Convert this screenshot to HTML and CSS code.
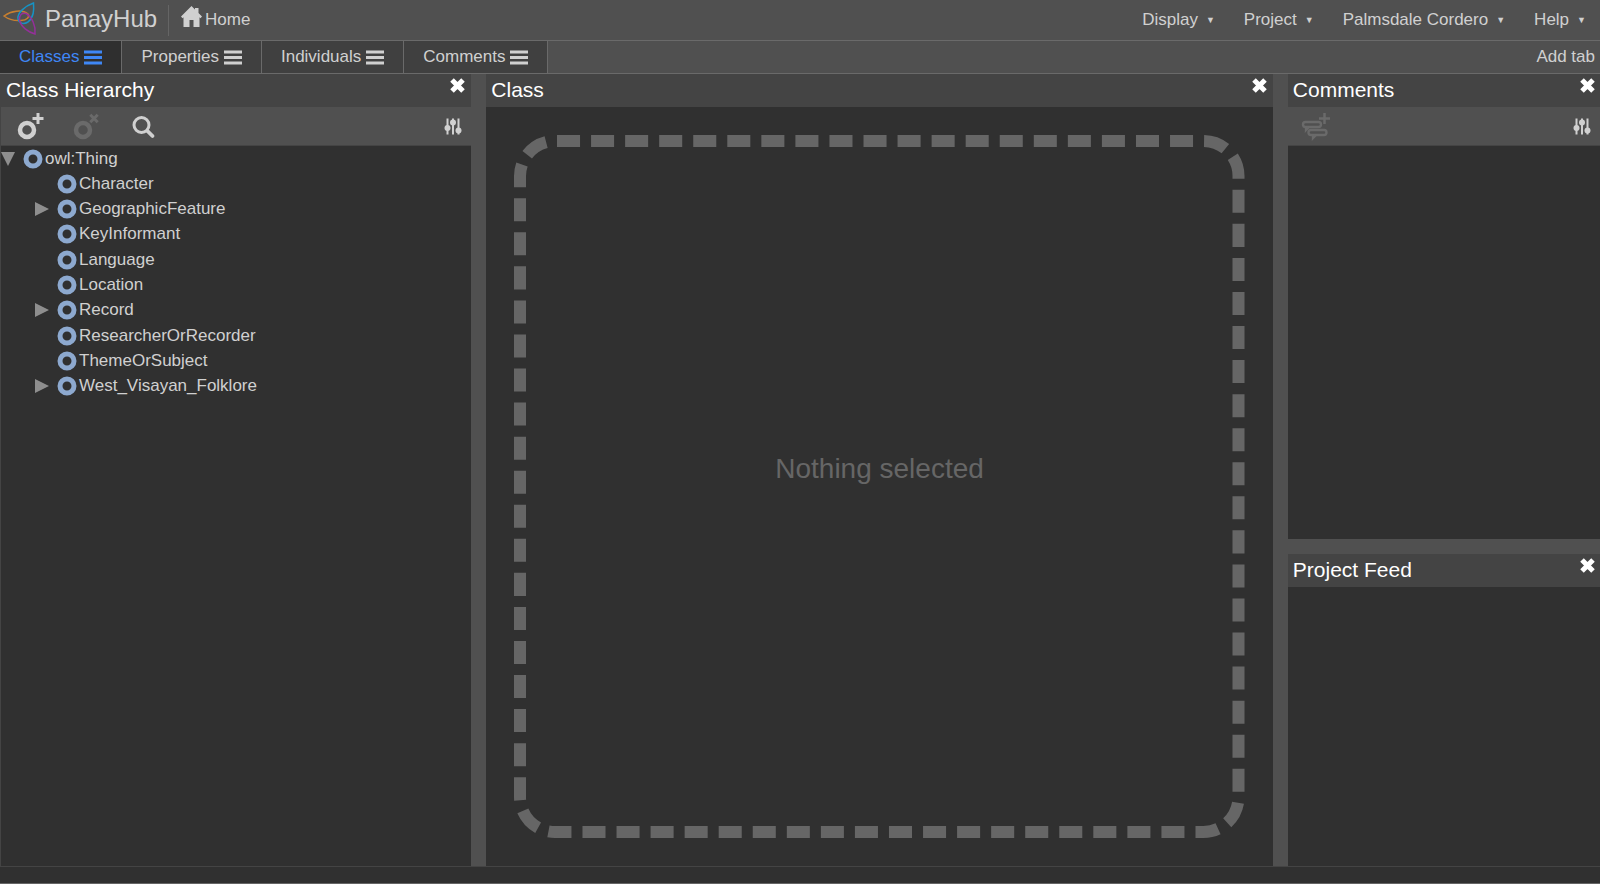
FILE: index.html
```html
<!DOCTYPE html>
<html lang="en">
<head>
<meta charset="utf-8">
<title>PanayHub</title>
<link rel="stylesheet" href="styles.css">
</head>
<body>
<svg class="symbols" aria-hidden="true">
  <symbol id="i-close" viewBox="0 0 15 15"><path d="M2 2 13 13M13 2 2 13" fill="none" stroke="currentColor" stroke-width="5"/></symbol>
  <symbol id="i-bars" viewBox="0 0 18 15"><path d="M0 2h18M0 7.500h18M0 13h18" fill="none" stroke="currentColor" stroke-width="3"/></symbol>
  <symbol id="i-sliders" viewBox="0 0 18 17"><path d="M3.500 0.500v16M9 0.500v16M14.500 0.500v16" fill="none" stroke="currentColor" stroke-width="2"/><circle cx="3.500" cy="10" r="3"/><circle cx="9" cy="4.500" r="3"/><circle cx="14.500" cy="12.500" r="3"/></symbol>
  <symbol id="i-ring" viewBox="0 0 20 20"><circle cx="10" cy="10" r="7" fill="none" stroke="currentColor" stroke-width="5"/></symbol>
  <symbol id="i-down" viewBox="0 0 14 14"><path d="M0 0h14L7 14z"/></symbol>
  <symbol id="i-right" viewBox="0 0 14 14"><path d="M0 0v14L14 7z"/></symbol>
</svg>

<header class="topbar">
  <svg class="logo" viewBox="0 0 36 36">
    <g fill="none" stroke-width="1.500">
      <path d="M4 14C11 9 22 7 28 12C30 15 27 18 21 18.500C14 19 8 17 4 14z" stroke="#c77f30"/>
      <path d="M33.500 1C25 4 17 11 18 17C19 21 23 23 28 20C34 15 34 8 33.500 1z" stroke="#1793c4"/>
      <path d="M35 32C36 24 32 15 26 11.500C22 10.500 19 13 19.500 18C21 25 28 30 35 32z" stroke="#94309a"/>
    </g>
  </svg>
  <h1 class="brand">PanayHub</h1>
  <a class="home" href="#">
    <svg class="home-icon" viewBox="0 0 21 21"><path d="M10.500 0 14 3.500V2h3.500v5L21 10.500 19.500 12.200 18.500 11.200V21H12.500V14H8.500V21H2.500V11.200L1.500 12.200 0 10.500z"/></svg>
    <span>Home</span>
  </a>
  <nav class="menus">
    <button class="menu">Display <span class="caret">▼</span></button>
    <button class="menu">Project <span class="caret">▼</span></button>
    <button class="menu">Palmsdale Cordero <span class="caret">▼</span></button>
    <button class="menu">Help <span class="caret">▼</span></button>
  </nav>
</header>

<nav class="tabs">
  <button class="tab active">Classes <svg class="bars"><use href="#i-bars"/></svg></button>
  <button class="tab">Properties <svg class="bars"><use href="#i-bars"/></svg></button>
  <button class="tab">Individuals <svg class="bars"><use href="#i-bars"/></svg></button>
  <button class="tab">Comments <svg class="bars"><use href="#i-bars"/></svg></button>
  <button class="add-tab">Add tab</button>
</nav>

<main class="workspace">
  <section class="panel hierarchy">
    <div class="panel-head"><h2>Class Hierarchy</h2><button class="close" aria-label="Close"><svg><use href="#i-close"/></svg></button></div>
    <div class="toolbar">
      <button class="tool" aria-label="Create class"><svg viewBox="0 0 28 28"><circle cx="11" cy="18" r="7" fill="none" stroke="currentColor" stroke-width="4.500"/><path d="M22 1v11M16.500 6.500h11" stroke="currentColor" stroke-width="3"/></svg></button>
      <button class="tool" aria-label="Delete class" disabled><svg viewBox="0 0 28 28"><circle cx="11" cy="18" r="7" fill="none" stroke="currentColor" stroke-width="4.500"/><path d="M18.300 2.800l7.400 7.400M25.700 2.800l-7.400 7.400" stroke="currentColor" stroke-width="3"/></svg></button>
      <button class="tool" aria-label="Search"><svg viewBox="0 0 28 28"><circle cx="13.500" cy="13" r="7.500" fill="none" stroke="currentColor" stroke-width="3"/><path d="M19.500 19l5 5" stroke="currentColor" stroke-width="3.800" stroke-linecap="round"/></svg></button>
      <button class="filter" aria-label="Filter"><svg><use href="#i-sliders"/></svg></button>
    </div>
    <ul class="tree">
      <li class="node root"><svg class="toggle"><use href="#i-down"/></svg><svg class="ring"><use href="#i-ring"/></svg><span>owl:Thing</span></li>
      <li>
        <ul class="children">
          <li class="node"><span class="toggle"></span><svg class="ring"><use href="#i-ring"/></svg><span>Character</span></li>
          <li class="node"><svg class="toggle"><use href="#i-right"/></svg><svg class="ring"><use href="#i-ring"/></svg><span>GeographicFeature</span></li>
          <li class="node"><span class="toggle"></span><svg class="ring"><use href="#i-ring"/></svg><span>KeyInformant</span></li>
          <li class="node"><span class="toggle"></span><svg class="ring"><use href="#i-ring"/></svg><span>Language</span></li>
          <li class="node"><span class="toggle"></span><svg class="ring"><use href="#i-ring"/></svg><span>Location</span></li>
          <li class="node"><svg class="toggle"><use href="#i-right"/></svg><svg class="ring"><use href="#i-ring"/></svg><span>Record</span></li>
          <li class="node"><span class="toggle"></span><svg class="ring"><use href="#i-ring"/></svg><span>ResearcherOrRecorder</span></li>
          <li class="node"><span class="toggle"></span><svg class="ring"><use href="#i-ring"/></svg><span>ThemeOrSubject</span></li>
          <li class="node"><svg class="toggle"><use href="#i-right"/></svg><svg class="ring"><use href="#i-ring"/></svg><span>West_Visayan_Folklore</span></li>
        </ul>
      </li>
    </ul>
  </section>

  <section class="panel details">
    <div class="panel-head"><h2>Class</h2><button class="close" aria-label="Close"><svg><use href="#i-close"/></svg></button></div>
    <div class="empty">
      <svg class="outline" aria-hidden="true"><rect rx="35" pathLength="2754"/></svg>
      <p>Nothing selected</p>
    </div>
  </section>

  <div class="side">
    <section class="panel comments">
      <div class="panel-head"><h2>Comments</h2><button class="close" aria-label="Close"><svg><use href="#i-close"/></svg></button></div>
      <div class="toolbar">
        <button class="tool" aria-label="New comment" disabled><svg viewBox="0 0 28 28"><g fill="none" stroke="currentColor" stroke-width="2.400"><rect x="0" y="10" width="18" height="5" rx="2.500"/><path d="M3 15v3l3-3"/><rect x="5.500" y="18" width="18" height="5" rx="2.500"/><path d="M10 23v3l3-3"/><path d="M21.500 1v11M16 6.500h11" stroke-width="2.500"/></g></svg></button>
        <button class="filter" aria-label="Filter"><svg><use href="#i-sliders"/></svg></button>
      </div>
    </section>
    <section class="panel feed">
      <div class="panel-head"><h2>Project Feed</h2><button class="close" aria-label="Close"><svg><use href="#i-close"/></svg></button></div>
    </section>
  </div>
</main>
<footer class="status"></footer>
</body>
</html>
```

FILE: styles.css
```css
* { box-sizing: border-box; }

body {
  margin: 0;
  min-height: 100vh;
  display: flex;
  flex-direction: column;
  background: #505050;
  color: #d0d0d0;
  font: 17px/20px "Liberation Sans", Arial, sans-serif;
}

h1, h2, p, ul { margin: 0; padding: 0; font-weight: normal; }
ul { list-style: none; }
svg { display: block; fill: currentColor; overflow: visible; }
.symbols { display: none; }

button {
  border: 0;
  padding: 0;
  background: none;
  color: inherit;
  font: inherit;
}

.topbar {
  display: flex;
  align-items: center;
  height: 41px;
  border-bottom: 1px solid #6a6a6a;
}
.logo { width: 36px; height: 36px; flex: none; }
.brand {
  margin-left: 9px;
  padding-right: 11px;
  border-right: 1px solid #656565;
  font-size: 24px;
  line-height: 28px;
  padding-bottom: 3px;
}
.home {
  display: flex;
  align-items: center;
  gap: 3px;
  margin-left: 12px;
  color: inherit;
  text-decoration: none;
}
.home-icon { width: 21px; height: 21px; margin-bottom: 8px; }
.menus { display: flex; gap: 29px; margin-left: auto; padding-right: 14px; }
.menu { display: flex; align-items: center; gap: 8px; }
.caret { font-size: 9px; }

.tabs {
  display: flex;
  height: 33px;
  border-bottom: 1px solid #6a6a6a;
}
.tab {
  display: flex;
  align-items: center;
  gap: 5px;
  padding: 0 19px;
  border-right: 1px solid #6a6a6a;
  background: #404040;
}
.tab.active { background: #2f2f2f; color: #3f87f5; }
.bars { width: 18px; height: 15px; }
.add-tab { margin-left: auto; padding-right: 5px; }

.workspace {
  flex: 1;
  display: grid;
  grid-template-columns: 471fr 786fr 312fr;
  column-gap: 15px;
}
.panel { display: flex; flex-direction: column; background: #303030; }
.panel-head {
  display: flex;
  align-items: flex-start;
  justify-content: space-between;
  height: 33px;
  padding: 3px 5px 0 5px;
  background: #444;
  color: #fff;
}
.panel-head h2 { font-size: 21px; line-height: 26px; }
.close svg { width: 15px; height: 15px; margin-top: 1px; }
.hierarchy .close { margin-right: 1px; }
.hierarchy { border-left: 1px solid #444; }
.details .close { margin-right: 1px; }

.toolbar {
  display: flex;
  align-items: center;
  gap: 28px;
  height: 39px;
  padding: 0 9px 0 15px;
  border-bottom: 1px solid #444;
  background: #505050;
}
.tool svg { width: 28px; height: 28px; }
.tool:disabled { color: #6a6a6a; }
.filter { margin-left: auto; }
.filter svg { width: 18px; height: 17px; }

.node { display: flex; align-items: center; gap: 2px; }
.root { height: 25px; }
.tree .toggle { width: 14px; height: 14px; margin-right: 6px; color: #8e8e8e; }
.ring { width: 20px; height: 20px; color: #8da9cf; }
.children { display: grid; grid-auto-rows: 1fr; height: 228px; padding-left: 34px; }

.empty {
  flex: 1;
  display: grid;
  place-items: center;
  position: relative;
  margin: 28px;
}
.empty p { padding-bottom: 36px; color: #666; font-size: 28px; line-height: 32px; }
.outline { position: absolute; inset: 0; width: 100%; height: 100%; }
.outline rect {
  x: 6px;
  y: 6px;
  width: calc(100% - 12px);
  height: calc(100% - 12px);
  fill: none;
  stroke: #666;
  stroke-width: 12px;
  stroke-dasharray: 23 11;
  stroke-dashoffset: -2px;
}

.side { display: grid; grid-template-rows: 464fr 311fr; row-gap: 15px; }

.status {
  height: 18px;
  border-top: 1px solid #444;
  border-bottom: 1px solid #656565;
  background: #303030;
}
```
